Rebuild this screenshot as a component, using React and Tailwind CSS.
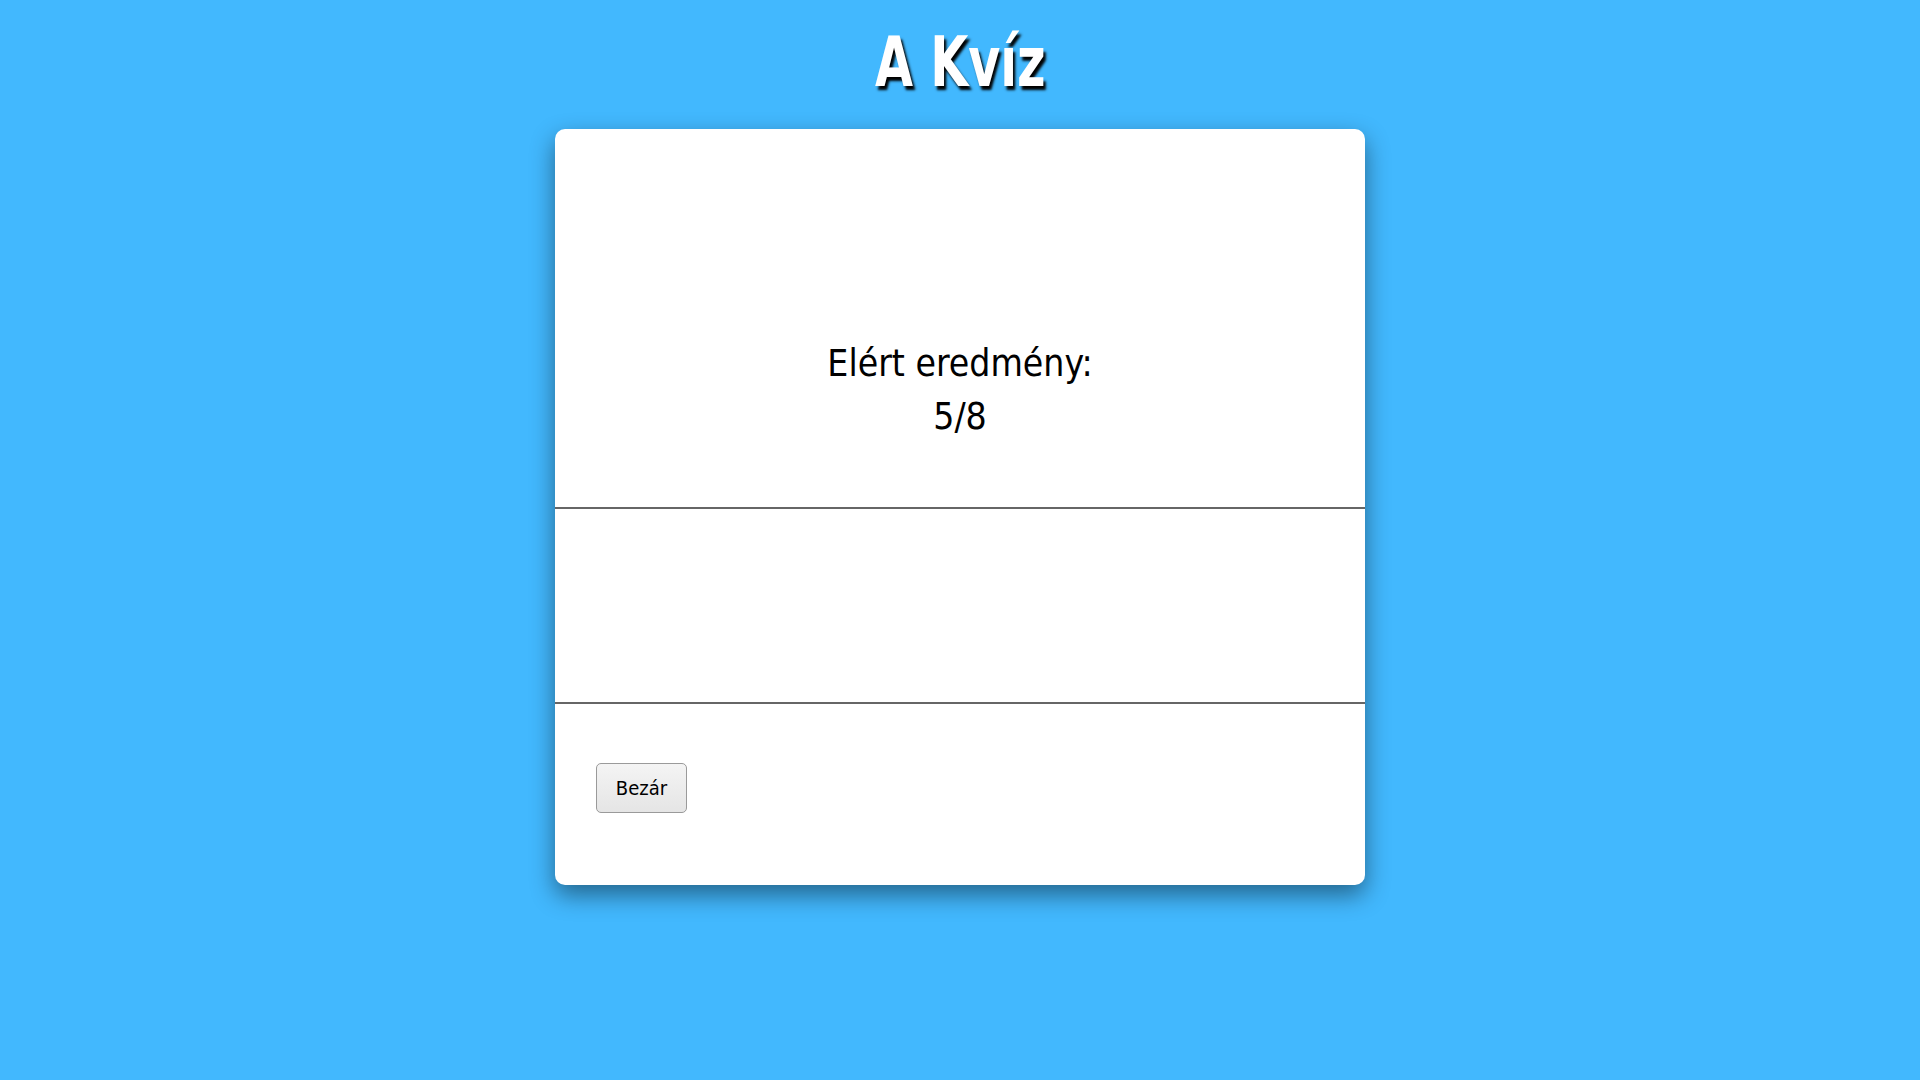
export default function App() {
  return (
    <div className="min-h-screen bg-[#42b8fe] flex flex-col items-center" style={{ fontFamily: '"DejaVu Sans Condensed", "DejaVu Sans", sans-serif' }}>
      <h1 className="h-[129px] flex items-center justify-center text-[70px] font-bold text-white leading-none pb-[6px] scale-x-[0.78] [text-shadow:3px_4px_3px_#000]">
        A Kvíz
      </h1>
      <div className="w-[810px] h-[756px] bg-white rounded-[10px] shadow-[0_10px_25px_rgba(0,0,0,0.45)] flex flex-col overflow-hidden">
        <div className="h-[378px] flex flex-col items-center pt-[208px] text-black text-[37px] leading-[53px] text-center">
          <p>Elért eredmény:</p>
          <p>5/8</p>
        </div>
        <div className="h-[2px] bg-[#666]"></div>
        <div className="h-[193px]"></div>
        <div className="h-[2px] bg-[#666]"></div>
        <div className="flex-1 pl-[41px] pt-[59px]">
          <button className="w-[91px] h-[50px] rounded-[5px] border border-[#9a9a9a] bg-gradient-to-b from-[#f4f4f4] to-[#e5e5e5] text-[20px] text-black">
            Bezár
          </button>
        </div>
      </div>
    </div>
  )
}
